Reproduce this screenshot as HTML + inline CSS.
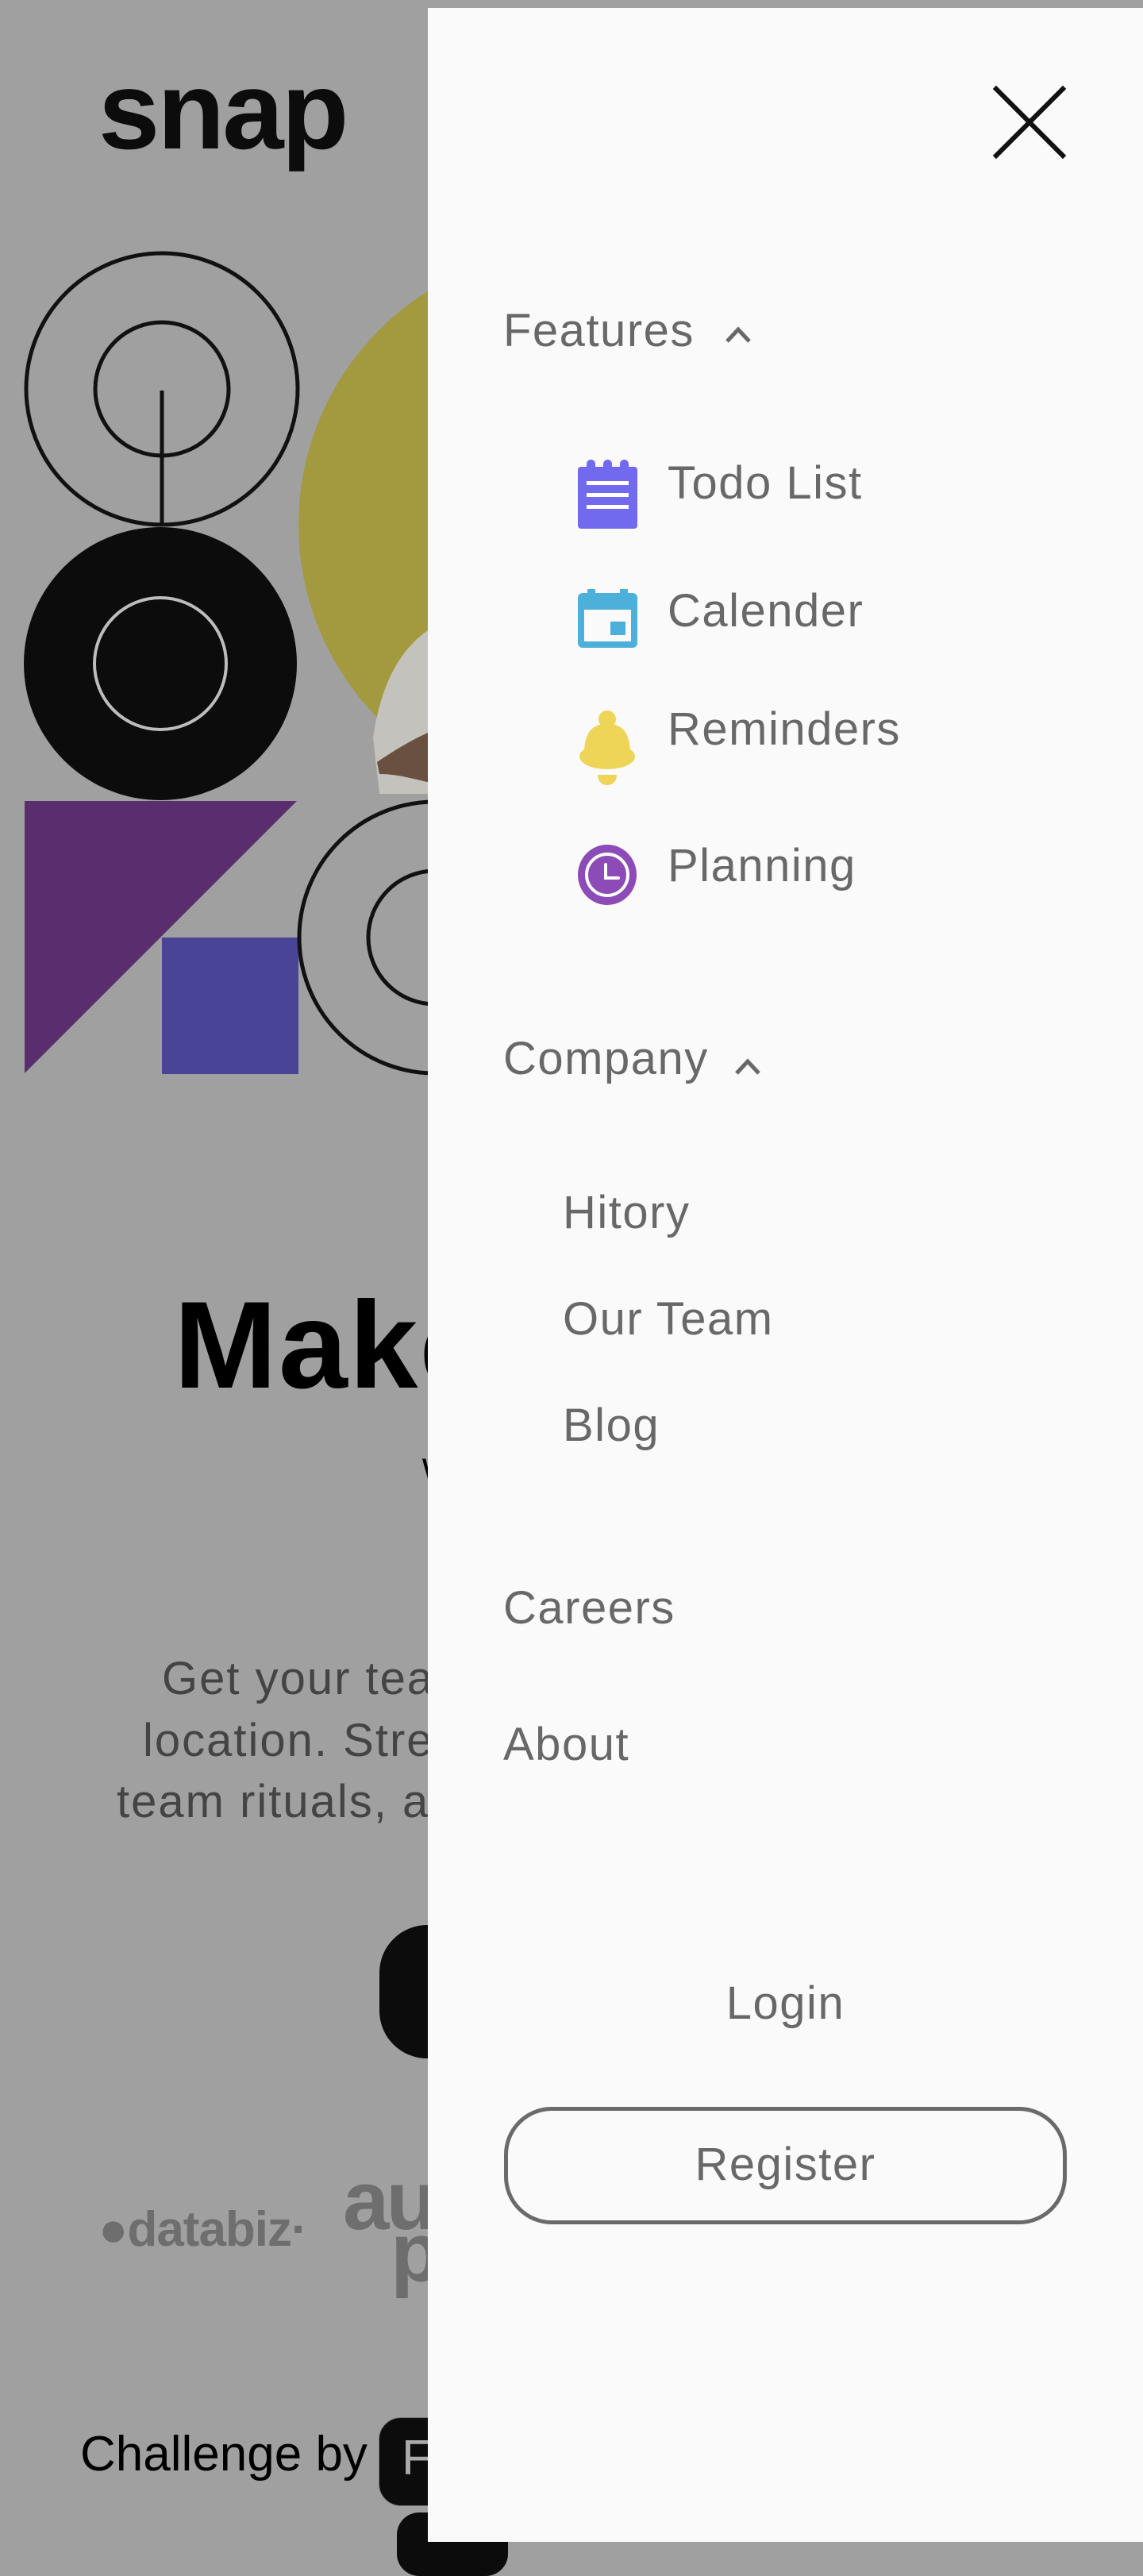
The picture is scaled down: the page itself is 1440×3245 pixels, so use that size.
<!DOCTYPE html>
<html>
<head>
<meta charset="utf-8">
<style>
html,body{margin:0;padding:0}
body{width:1440px;height:3202px;position:relative;overflow:hidden;background:#a0a0a0;font-family:"Liberation Sans",sans-serif}
.a{position:absolute;white-space:nowrap}
#panel{position:absolute;left:539px;top:10px;width:901px;height:3192px;background:#fafafa}
.nav{position:absolute;color:#686868;font-size:58px;line-height:1;letter-spacing:1.5px}
</style>
</head>
<body>
<!-- background page -->
<div class="a" style="left:124px;top:70px;font-size:139px;font-weight:bold;letter-spacing:-3px;color:#0c0c0c;line-height:1">snap</div>
<svg class="a" style="left:0;top:0" width="560" height="1400" viewBox="0 0 560 1400">
  <circle cx="723" cy="661" r="347" fill="#a39a3f"/>
  <path d="M478 1000 L470 930 C480 860 505 815 545 790 L560 780 L560 1000 Z" fill="#c4c2bc"/>
  <path d="M475 960 C505 940 530 925 560 915 L560 990 C535 985 505 975 478 975 Z" fill="#6a5040"/>
  <circle cx="204" cy="490" r="171" fill="none" stroke="#111" stroke-width="5"/>
  <circle cx="204" cy="490" r="84" fill="none" stroke="#111" stroke-width="5"/>
  <line x1="204" y1="492" x2="204" y2="662" stroke="#111" stroke-width="5"/>
  <circle cx="202" cy="836" r="172" fill="#0c0c0c"/>
  <circle cx="202" cy="836" r="83" fill="none" stroke="#bdbdbd" stroke-width="4"/>
  <polygon points="31,1009 374,1009 31,1352" fill="#5a2e6e"/>
  <rect x="204" y="1181" width="172" height="172" fill="#4a4497"/>
  <circle cx="548" cy="1181" r="171" fill="none" stroke="#111" stroke-width="5"/>
  <circle cx="548" cy="1181" r="84" fill="none" stroke="#111" stroke-width="5"/>
</svg>
<div class="a" style="left:219px;top:1617px;font-size:156px;font-weight:bold;color:#000;line-height:1;letter-spacing:2px">Make</div>
<div class="a" style="left:532px;top:1822px;font-size:50px;color:#000;line-height:1">w</div>
<div class="a" style="left:204px;top:2086px;font-size:58px;color:#444;line-height:1;letter-spacing:2px">Get your team</div>
<div class="a" style="left:180px;top:2164px;font-size:58px;color:#444;line-height:1;letter-spacing:2px">location. Stream</div>
<div class="a" style="left:147px;top:2241px;font-size:58px;color:#444;line-height:1;letter-spacing:2px">team rituals, and</div>
<div class="a" style="left:478px;top:2425px;width:200px;height:168px;background:#0c0c0c;border-radius:60px"></div>
<div class="a" style="left:124px;top:2778px;font-size:62px;font-weight:bold;color:#6e6e6e;line-height:1;letter-spacing:-1px">●databiz·</div>
<div class="a" style="left:432px;top:2740px;font-size:105px;font-weight:bold;color:#6e6e6e;line-height:0.62;letter-spacing:-4px">au<br><span style="padding-left:60px">p</span></div>
<div class="a" style="left:101px;top:3061px;font-size:62px;color:#000;line-height:1">Challenge by</div>
<div class="a" style="left:477px;top:3045px;width:140px;height:112px;background:#0c0c0c;border-radius:28px;border:1px solid #777;box-sizing:border-box"></div>
<div class="a" style="left:506px;top:3066px;font-size:62px;color:#aaa;line-height:1">F</div>
<div class="a" style="left:500px;top:3165px;width:140px;height:80px;background:#0c0c0c;border-radius:28px"></div>

<!-- menu panel -->
<div id="panel"></div>
<svg class="a" style="left:1240px;top:100px" width="110" height="110" viewBox="1240 100 110 110">
  <path d="M1255 112 L1339 196 M1339 112 L1255 196" stroke="#111" stroke-width="6" stroke-linecap="square"/>
</svg>

<div class="nav" style="left:634px;top:388px">Features</div>
<svg class="a" style="left:905px;top:400px" width="50" height="45" viewBox="905 400 50 45">
  <path d="M916 430 L930 415 L944 430" fill="none" stroke="#686868" stroke-width="5"/>
</svg>

<svg class="a" style="left:720px;top:570px" width="90" height="600" viewBox="720 570 90 600">
  <rect x="728" y="588" width="75" height="78" rx="4" fill="#7169ee"/>
  <rect x="739" y="579" width="11" height="16" rx="5.5" fill="#7169ee"/>
  <rect x="760" y="579" width="11" height="16" rx="5.5" fill="#7169ee"/>
  <rect x="781" y="579" width="11" height="16" rx="5.5" fill="#7169ee"/>
  <rect x="739" y="606" width="53" height="5" fill="#fff"/>
  <rect x="739" y="621" width="53" height="5" fill="#fff"/>
  <rect x="739" y="636" width="53" height="5" fill="#fff"/>
  <rect x="728" y="747" width="75" height="69" rx="6" fill="#4cb0db"/>
  <rect x="740" y="742" width="10" height="10" fill="#4cb0db"/>
  <rect x="781" y="742" width="10" height="10" fill="#4cb0db"/>
  <rect x="736" y="768" width="59" height="40" fill="#fafafa"/>
  <rect x="769" y="783" width="19" height="17" fill="#4cb0db"/>
  <circle cx="765" cy="906" r="11" fill="#efd557"/>
  <path d="M736 950 C736 920 748 912 765 912 C782 912 794 920 794 950 Z" fill="#efd557"/>
  <ellipse cx="765" cy="953" rx="35" ry="16" fill="#efd557"/>
  <path d="M753 976 L777 976 C777 984 772 989 765 989 C758 989 753 984 753 976 Z" fill="#efd557"/>
  <ellipse cx="765" cy="1102" rx="37" ry="38" fill="#8c4bb6"/>
  <ellipse cx="765" cy="1102" rx="26" ry="26" fill="none" stroke="#fff" stroke-width="4"/>
  <path d="M763 1089 L763 1106 L779 1106" fill="none" stroke="#fff" stroke-width="4" stroke-linecap="round"/>
</svg>
<div class="nav" style="left:841px;top:580px">Todo List</div>
<div class="nav" style="left:841px;top:741px">Calender</div>
<div class="nav" style="left:841px;top:890px">Reminders</div>
<div class="nav" style="left:841px;top:1062px">Planning</div>

<div class="nav" style="left:634px;top:1305px">Company</div>
<svg class="a" style="left:915px;top:1320px" width="50" height="45" viewBox="915 1320 50 45">
  <path d="M928 1352 L942 1337 L956 1352" fill="none" stroke="#686868" stroke-width="5"/>
</svg>

<div class="nav" style="left:709px;top:1499px">Hitory</div>
<div class="nav" style="left:709px;top:1633px">Our Team</div>
<div class="nav" style="left:709px;top:1767px">Blog</div>
<div class="nav" style="left:634px;top:1997px">Careers</div>
<div class="nav" style="left:634px;top:2169px">About</div>
<div class="nav" style="left:539px;width:901px;text-align:center;top:2495px">Login</div>
<div class="a" style="left:635px;top:2654px;width:709px;height:148px;border:5px solid #6a6a6a;border-radius:60px;box-sizing:border-box"></div>
<div class="nav" style="left:635px;width:709px;text-align:center;top:2698px">Register</div>
</body>
</html>
